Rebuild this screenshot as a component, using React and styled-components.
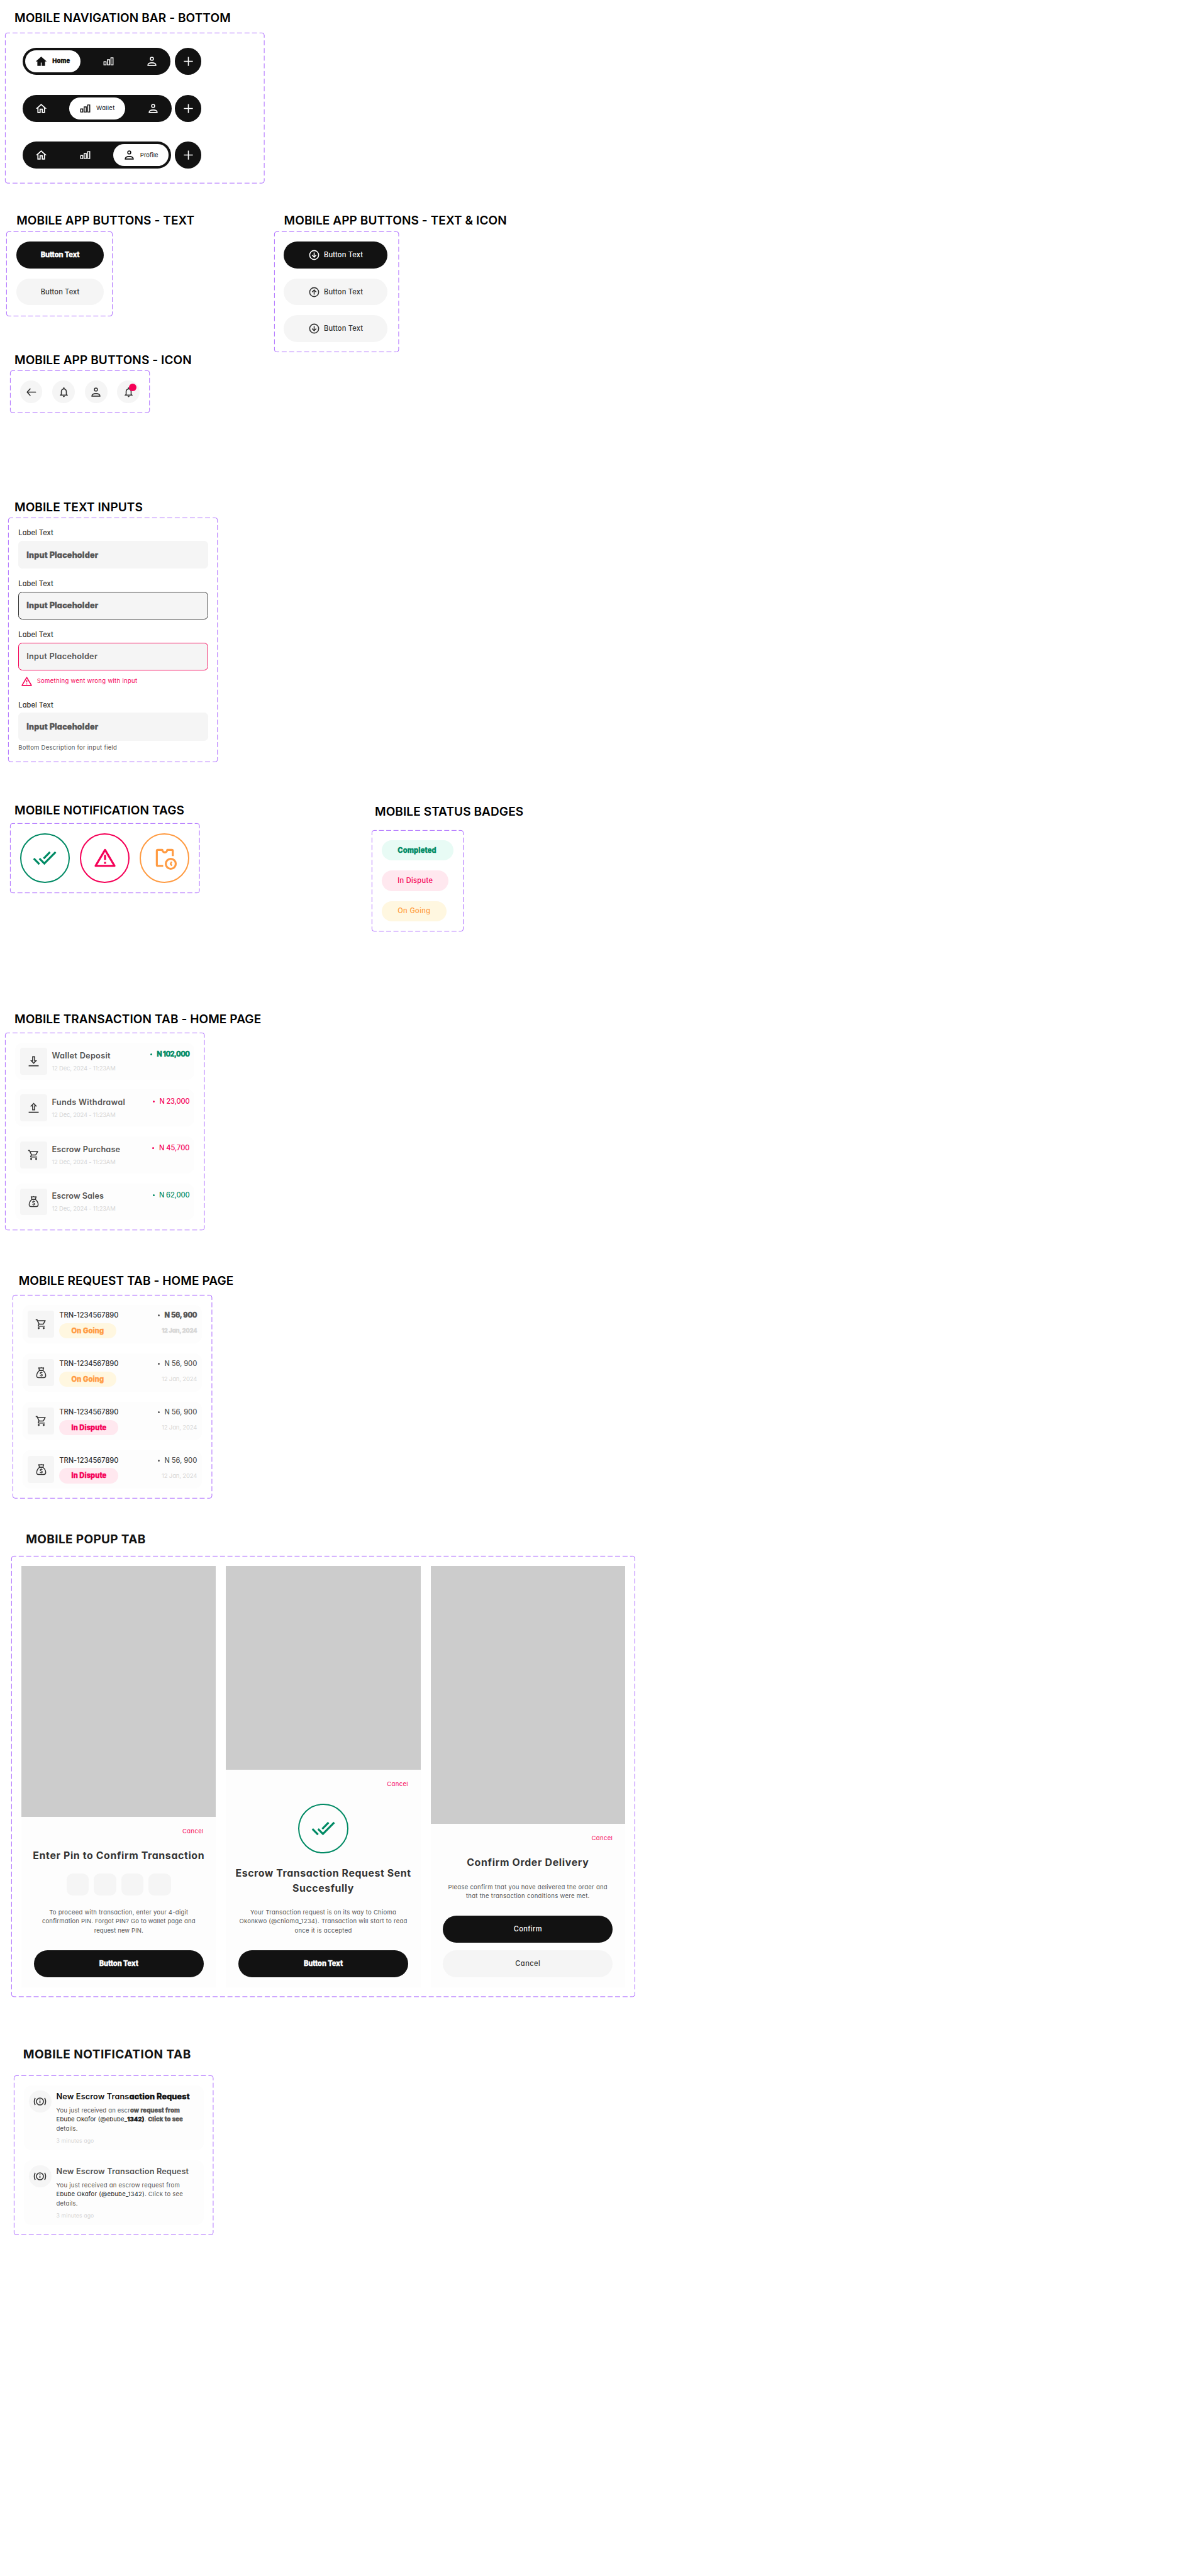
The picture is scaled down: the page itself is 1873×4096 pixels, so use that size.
import React from "react";
import styled, { createGlobalStyle, css } from "styled-components";
import { MdDoneAll, MdOutlineShoppingCart, MdNotificationsNone } from "react-icons/md";

const u = (n) => `${n / 10}rem`;

const c = {
  ink: "#121212", text: "#333333", mute: "#555555", faint: "#d6d6d6", fill: "#f5f5f5", card: "#fdfdfd",
  red: "#f50057", redBg: "#ffe8ef", green: "#008a64", greenBg: "#e8fbf5", orange: "#ff9b42", orangeBg: "#fff7e0",
  purple: "#9747ff", grey: "#cccccc",
};

const Global = createGlobalStyle`
  html { font-size: 7.9331px; }
  body { margin: 0; background: #ffffff; font-family: Inter, "Open Sans", sans-serif; font-feature-settings: "cv11"; }
  *, *::before, *::after { box-sizing: border-box; }
`;

const Page = styled.main`height: ${u(5163)}; padding-top: ${u(21.2)}; overflow: hidden;`;
const Section = styled.section`margin-top: ${(p) => u(p.$top || 0)};`;
const Columns = styled.div`display: flex; align-items: flex-start;`;
const Column = styled.div`width: ${(p) => u(p.$w)}; flex: none;`;

/* track: letter spacing in thousandths of an em */
const T = styled.span`
  display: block;
  white-space: nowrap;
  font-size: ${(p) => u(p.$size || 14)};
  line-height: ${(p) => u(p.$lh || 21)};
  font-weight: ${(p) => p.$weight || 400};
  color: ${(p) => p.$color || c.text};
  letter-spacing: ${(p) => (p.$track || 0) / 1000}em;
  ${(p) => p.$heavy && css`font-weight: 800; -webkit-text-stroke: 0.4px currentColor;`}
`;

const Title = styled.h2`
  margin: 0 0 0 ${(p) => u(p.$x)};
  font-size: ${u(24)};
  line-height: ${u(30)};
  font-weight: ${(p) => p.$weight || 600};
  color: ${(p) => p.$color || "#000"};
  letter-spacing: ${(p) => (p.$track || 5) / 1000}em;
  white-space: nowrap;
`;

const Panel = styled.div`
  position: relative;
  display: flex;
  flex-direction: ${(p) => (p.$row ? "row" : "column")};
  align-items: flex-start;
  width: ${(p) => u(p.$w)};
  height: ${(p) => u(p.$h)};
  margin: ${(p) => u(p.$top)} 0 0 ${(p) => u(p.$x)};
  padding: ${(p) => p.$pad || u(20)};
  gap: ${(p) => u(p.$gap ?? 20)};
`;
const Outline = styled.svg`position: absolute; inset: 0; width: 100%; height: 100%; overflow: visible; pointer-events: none;`;

function Frame({ x, top, w, h, gap, row, pad, children }) {
  const fit = (len) => { const n = Math.round((len + 5) / 15); return `10 ${(len + 5) / n - 10}`; };
  const r = w - 0.5, b = h - 0.5;
  return (
    <Panel $x={x} $top={top} $w={w} $h={h} $gap={gap} $row={row} $pad={pad}>
      <Outline viewBox={`0 0 ${w} ${h}`} preserveAspectRatio="none" fill="none" stroke={c.purple}>
        <path d={`M5 .5H${w - 5}M5 ${b}H${w - 5}`} strokeDasharray={fit(w)} strokeDashoffset="5" />
        <path d={`M.5 5V${h - 5}M${r} 5V${h - 5}`} strokeDasharray={fit(h)} strokeDashoffset="5" />
        <path d={`M.5 5A4.5 4.5 0 0 1 5 .5M${w - 5} .5A4.5 4.5 0 0 1 ${r} 5M${r} ${h - 5}A4.5 4.5 0 0 1 ${w - 5} ${b}M5 ${b}A4.5 4.5 0 0 1 .5 ${h - 5}`} />
      </Outline>
      {children}
    </Panel>
  );
}

const Icon = styled.span`
  display: inline-flex;
  flex: none;
  width: ${(p) => u(p.$s || 24)};
  height: ${(p) => u(p.$s || 24)};
  color: ${(p) => p.$color || "inherit"};
  svg { width: 100%; height: 100%; overflow: visible; }
`;
const Svg = ({ children, sw = 2, ...r }) => (
  <svg viewBox="0 0 24 24" fill="none" stroke="currentColor" strokeWidth={sw} {...r}>{children}</svg>
);
const Home = ({ solid }) => (
  <Svg stroke="none" fill="currentColor" viewBox="1.1 0.7 21.8 21.8">
    <path d={solid ? "M11.200 20v-6h1.600v6H19v-8h3L12 3 2 12h3v8z" : "M12 5.690l5 4.500V18h-2v-6H9v6H7v-7.810l5-4.500M12 3L2 12h3v8h6v-6h2v6h6v-8h3L12 3z"} />
  </Svg>
);
const Bars = () => <Svg sw="1.8"><path d="M2.9 12.9h4.2v6.2H2.9zM9.9 8.9h4.2v10.2H9.9zM16.9 4.9h4.2v14.2h-4.2z" /></Svg>;
const Person = () => <Svg><circle cx="12" cy="6.800" r="3" /><path d="M4 20c0-3.200 3.600-5 8-5s8 1.800 8 5z" /></Svg>;
const Plus = () => <Svg><path d="M12 3v18M3 12h18" /></Svg>;
const Back = () => <Svg strokeLinejoin="round" strokeLinecap="round"><path d="M21 12H4.200M10 5.500 4 12l6 6.500" /></Svg>;
const ArrowDown = () => <Svg><circle cx="12" cy="12" r="9" /><path d="M12 7v9M7.800 12l4.200 4.200 4.200-4.200" /></Svg>;
const ArrowUp = () => <Svg><circle cx="12" cy="12" r="9" /><path d="M12 17V8M7.800 12 12 7.800l4.200 4.200" /></Svg>;
const Warning = () => (
  <Svg strokeLinejoin="round"><path d="M12 4l9.500 16h-19z" /><path d="M12 9v5M12 16v2" /></Svg>
);
const Pending = () => (
  <Svg strokeLinejoin="round">
    <path d="M20 10.200V5a1 1 0 0 0-1-1h-4.500a2.500 2.500 0 0 1-5 0H5a1 1 0 0 0-1 1v14a1 1 0 0 0 1 1h5.400" />
    <circle cx="18" cy="18" r="5" /><path d="M18.900 15.800 17.700 18l1.400 1.900" strokeWidth="1.500" strokeLinejoin="miter" />
  </Svg>
);
const Deposit = () => <Svg fill="currentColor" stroke="none" fillRule="evenodd"><path d="M19 10h-4V2H9v8H5l7 7.200zM11 12V4h2v8h1.400L12 14.400 9.600 12zM2 20h20v2H2z" /></Svg>;
const Withdraw = () => <Svg fill="currentColor" stroke="none" fillRule="evenodd"><path d="M19 9.200h-4V17H9V9.200H5L12 2zM11 7.200V15h2V7.200h1.400L12 4.800 9.600 7.200zM2 20h20v2H2z" /></Svg>;
const Bag = () => (
  <Svg sw="1.8" strokeLinejoin="round">
    <path d="M8.600 7.500 7 2.500l3 .4 2-.9 2 .9 3-.4-1.600 5z" />
    <path d="M8.600 7.500h6.800c3.400 3 5.600 6.500 5.600 10.500 0 3-1 4-3.500 4h-11C4 22 3 21 3 18c0-4 2.200-7.500 5.600-10.500z" />
    <path strokeWidth="1.400" d="M14.300 12.600c-.5-.8-1.300-1.100-2.300-1.100-1.300 0-2.200.6-2.200 1.700 0 2.600 4.600 1.200 4.600 3.700 0 1.100-1 1.700-2.400 1.700-1.100 0-2-.4-2.500-1.200M12 10v1.500M12 18.600v1.400" />
  </Svg>
);
const Alert = () => (
  <Svg><circle cx="12" cy="12" r="7" /><path d="M12 11.500v4M12 8v2" /><path d="M2.500 4.800c-2 4-2 10.400 0 14.400M21.500 4.800c2 4 2 10.400 0 14.400" /></Svg>
);

/* Bottom navigation */
const NavRow = styled.div`display: flex; height: ${u(54)};`;
const NavBar = styled.nav`
  display: flex; align-items: center; gap: ${u(24)};
  height: ${u(54)}; width: ${(p) => u(p.$w)}; padding: 0 ${u(5)}; margin-right: ${(p) => u(304 - p.$w)};
  border-radius: ${u(27)}; background: ${c.ink}; color: #fff;
`;
const NavItem = styled.div`
  display: flex; align-items: center; gap: ${u(10)};
  width: ${(p) => u(p.$w || 64)}; height: ${u(44)}; padding-left: ${u(20)}; flex: none;
  border-radius: ${u(22)};
  ${(p) => p.$w && css`background: #fff; color: ${c.ink};`}
`;
const Round = styled.div`
  position: relative; display: flex; align-items: center; justify-content: center; flex: none;
  width: ${(p) => u(p.$d)}; height: ${(p) => u(p.$d)}; border-radius: 50%;
  background: ${(p) => p.$bg || c.fill}; color: ${(p) => p.$color || c.text};
`;
const Dot = styled.i`
  position: absolute; left: ${u(24)}; top: ${u(6)}; width: ${u(15)}; height: ${u(15)}; border-radius: 50%; background: ${c.red};
`;
const navItems = [
  { id: "home", label: "Home", track: 17, heavy: true, bar: 296, pill: 110 },
  { id: "wallet", label: "Wallet", track: 27, bar: 298, pill: 112 },
  { id: "profile", label: "Profile", track: -2, bar: 297, pill: 111 },
];
const NavIcon = ({ id, active }) => (
  <Icon>{id === "home" ? <Home solid={active} /> : id === "wallet" ? <Bars /> : <Person />}</Icon>
);

/* Buttons */
const Button = styled.div`
  display: flex; align-items: center; justify-content: center; gap: ${u(8)};
  width: ${(p) => u(p.$w)}; height: ${u(54)}; flex: none; border-radius: ${u(27)};
  background: ${(p) => (p.$dark ? c.ink : c.fill)}; color: ${(p) => (p.$dark ? "#fff" : c.text)};
`;

/* Inputs */
const Field = styled.div`display: flex; flex-direction: column; gap: ${u(5)}; width: ${u(380)};`;
const Box = styled.div`
  display: flex; align-items: center; height: ${u(56)}; padding: 0 ${u(15)}; border-radius: ${u(8)};
  background: ${c.fill}; border: 1px solid ${(p) => p.$border || c.fill};
`;
const ErrorRow = styled.div`display: flex; align-items: center; gap: ${u(8)}; height: ${u(34)}; padding-left: ${u(5)};`;
const Input = ({ border, heavy }) => (
  <>
    <T $weight={500} $track={4}>Label Text</T>
    <Box $border={border}><T $size={16} $lh={24} $weight={600} $color={c.mute} $heavy={heavy} $track={heavy ? 13 : 22}>Input Placeholder</T></Box>
  </>
);

/* Tags and badges */
const Ring = styled.div`
  display: flex; align-items: center; justify-content: center; flex: none;
  width: ${u(100)}; height: ${u(100)}; border-radius: 50%; border: ${u(3)} solid ${(p) => p.$color}; color: ${(p) => p.$color};
`;
const Pill = styled.div`
  display: flex; align-items: center; width: ${(p) => u(p.$w)}; height: ${(p) => u(p.$h)};
  padding-left: ${(p) => u(p.$pad)}; border-radius: ${u(21)}; background: ${(p) => p.$bg};
`;

/* List cards */
const Card = styled.article`
  display: flex; align-items: center; width: ${u(360)}; height: ${(p) => u(p.$h)}; padding: ${u(10)}; gap: ${u(10)};
  border-radius: ${u(15)}; background: ${c.card};
`;
const Tile = styled.div`
  display: flex; align-items: center; justify-content: center; width: ${u(54)}; height: ${u(54)}; flex: none;
  border-radius: ${u(5)}; background: ${c.fill}; color: ${c.text};
`;
const Stack = styled.div`display: flex; flex-direction: column; flex: 1; gap: ${u(5)};`;
const Side = styled.div`
  display: flex; flex-direction: column; align-items: flex-end; align-self: stretch;
  gap: ${(p) => u(p.$gap || 0)}; padding-top: ${(p) => u(p.$top || 0)};
`;
const Amount = styled.div`
  display: flex; align-items: center; gap: ${u(9.5)}; color: ${(p) => p.$color};
  &::before { content: ""; width: 3px; height: 3px; border-radius: 50%; background: currentColor; }
`;

/* Popups */
const Phone = styled.div`display: flex; flex-direction: column; width: ${u(390)}; height: ${u(844)}; flex: none; background: ${c.grey};`;
const Sheet = styled.div`
  display: flex; flex-direction: column; align-items: center; margin-top: auto; height: ${(p) => u(p.$h)};
  padding: ${u(20)} ${u(25)}; background: ${c.card};
`;
const CancelLink = styled.div`align-self: flex-end;`;
const Block = styled.div`display: flex; flex-direction: column; align-items: center; gap: ${(p) => u(p.$gap || 0)}; margin-top: ${(p) => u(p.$top)};`;
const Pins = styled.div`display: flex; gap: ${u(10)}; margin-top: ${u(20)};`;
const Pin = styled.i`width: ${u(45)}; height: ${u(45)}; border-radius: ${u(12)}; background: ${c.fill};`;
const Cancel = () => <CancelLink><T $size={12} $lh={18} $color={c.red} $track={34}>Cancel</T></CancelLink>;
const Heading = ({ lines }) => (
  <Block $top={25}>{lines.map(([t, k]) => <T key={t} $size={20} $lh={30} $weight={700} $track={k}>{t}</T>)}</Block>
);
const Copy = ({ lines }) => (
  <Block $top={25}>{lines.map(([t, k]) => <T key={t} $size={12} $lh={18} $color={c.mute} $track={k}>{t}</T>)}</Block>
);

/* Notifications */
const Note = styled.article`display: flex; gap: ${u(10)}; width: ${u(360)}; height: ${u(130)}; padding: ${u(10)}; border-radius: ${u(15)}; background: ${c.card};`;
const NoteText = styled.div`display: flex; flex-direction: column; gap: ${u(8)};`;
const Glow = styled.b`font-weight: 800; -webkit-text-stroke: 0.4px currentColor;`;
const Name = styled.span`color: ${c.ink};`;

const transactions = [
  [Deposit, "Wallet Deposit", 24, "N 102,000", -50, c.green, true],
  [Withdraw, "Funds Withdrawal", 26, "N 23,000", -16, c.red],
  [MdOutlineShoppingCart, "Escrow Purchase", 12, "N 45,700", -5, c.red],
  [Bag, "Escrow Sales", 2, "N 62,000", -15, c.green],
];
const requests = [
  [MdOutlineShoppingCart, true, true], [Bag, true], [MdOutlineShoppingCart, false], [Bag, false],
];

export default function App() {
  return (
    <Page>
      <Global />
      <Section>
        <Title $x={29}>MOBILE NAVIGATION BAR - BOTTOM</Title>
        <Frame x={10} top={14.8} w={520} h={302} gap={40} pad={`${u(30)} ${u(36)}`}>
          {navItems.map((row) => (
            <NavRow key={row.id}>
              <NavBar $w={row.bar}>
                {navItems.map(({ id }) => (
                  <NavItem key={id} $w={row.id === id ? row.pill : 0}>
                    <NavIcon id={id} active={row.id === id} />
                    {row.id === id && <T $size={12} $lh={18} $color={c.ink} $heavy={row.heavy} $track={row.track}>{row.label}</T>}
                  </NavItem>
                ))}
              </NavBar>
              <Round $d={54} $bg={c.ink} $color="#fff"><Icon><Plus /></Icon></Round>
            </NavRow>
          ))}
        </Frame>
      </Section>

      <Columns>
        <Column $w={549}>
          <Section $top={59.7}>
            <Title $x={33}>MOBILE APP BUTTONS - TEXT</Title>
            <Frame x={13} top={6.3} w={213} h={170}>
              <Button $w={175} $dark><T $weight={500} $color="#fff" $heavy $track={-7}>Button Text</T></Button>
              <Button $w={175}><T $weight={500} $track={13}>Button Text</T></Button>
            </Frame>
          </Section>
          <Section $top={72.7}>
            <Title $x={29}>MOBILE APP BUTTONS - ICON</Title>
            <Frame x={20} top={6.3} w={280} h={85} row>
              <Round $d={45}><Icon><Back /></Icon></Round>
              <Round $d={45}><Icon><MdNotificationsNone /></Icon></Round>
              <Round $d={45}><Icon><Person /></Icon></Round>
              <Round $d={45}><Icon><MdNotificationsNone /></Icon><Dot /></Round>
            </Frame>
          </Section>
        </Column>
        <Section $top={59.7}>
          <Title $x={20.3}>MOBILE APP BUTTONS - TEXT & ICON</Title>
          <Frame x={0} top={6.3} w={250} h={242}>
            {[ArrowDown, ArrowUp, ArrowDown].map((A, i) => (
              <Button key={i} $w={207} $dark={i === 0}><Icon><A /></Icon><T $weight={500} $color="inherit" $track={17}>Button Text</T></Button>
            ))}
          </Frame>
        </Section>
      </Columns>

      <Section $top={173.6}>
        <Title $x={29}>MOBILE TEXT INPUTS</Title>
        <Frame x={17} top={6.4} w={420} h={490}>
          <Field><Input heavy /></Field>
          <Field><Input heavy border={c.text} /></Field>
          <Field>
            <Input border={c.red} />
            <ErrorRow><Icon $color={c.red}><Warning /></Icon><T $size={12} $lh={18} $color={c.red} $track={32}>Something went wrong with input</T></ErrorRow>
          </Field>
          <Field>
            <Input heavy />
            <T $size={12} $lh={18} $color={c.mute} $track={26}>Bottom Description for input field</T>
          </Field>
        </Frame>
      </Section>

      <Columns>
        <Column $w={745}>
          <Section $top={82.3}>
            <Title $x={29}>MOBILE NOTIFICATION TAGS</Title>
            <Frame x={20} top={9.7} w={380} h={140} row>
              <Ring $color={c.green}><Icon $s={48}><MdDoneAll /></Icon></Ring>
              <Ring $color={c.red}><Icon $s={48}><Warning /></Icon></Ring>
              <Ring $color={c.orange}><Icon $s={48}><Pending /></Icon></Ring>
            </Frame>
          </Section>
        </Column>
        <Section $top={84.3}>
          <Title $x={6.3}>MOBILE STATUS BADGES</Title>
          <Frame x={0} top={21.7} w={184} h={203}>
            <Pill $w={144.3} $h={41} $pad={32} $bg={c.greenBg}><T $weight={500} $color={c.green} $heavy $track={14}>Completed</T></Pill>
            <Pill $w={134.3} $h={41} $pad={32} $bg={c.redBg}><T $weight={500} $color={c.red} $track={25}>In Dispute</T></Pill>
            <Pill $w={130.3} $h={41} $pad={32} $bg={c.orangeBg}><T $weight={500} $color={c.orange} $track={32}>On Going</T></Pill>
          </Frame>
        </Section>
      </Columns>

      <Section $top={161.3}>
        <Title $x={29}>MOBILE TRANSACTION TAB - HOME PAGE</Title>
        <Frame x={10} top={11.7} w={400} h={396}>
          {transactions.map(([I, name, nameTrack, amount, track, color, heavy]) => (
            <Card key={name} $h={74}>
              <Tile><Icon><I /></Icon></Tile>
              <Stack>
                <T $size={16} $lh={24} $weight={600} $color={c.mute} $track={nameTrack}>{name}</T>
                <T $size={12} $lh={18} $color={c.faint} $track={-24}>12 Dec, 2024 - 11:23AM</T>
              </Stack>
              <Side $top={3}><Amount $color={color}><T $weight={500} $color="inherit" $heavy={heavy} $track={track}>{amount}</T></Amount></Side>
            </Card>
          ))}
        </Frame>
      </Section>

      <Section $top={87.2}>
        <Title $x={37.5}>MOBILE REQUEST TAB - HOME PAGE</Title>
        <Frame x={25} top={12.8} w={400} h={408}>
          {requests.map(([I, going, heavy], i) => (
            <Card key={i} $h={77}>
              <Tile><Icon><I /></Icon></Tile>
              <Stack>
                <T $weight={500} $track={-5}>TRN-1234567890</T>
                <Pill $w={going ? 114 : 118.3} $h={31} $pad={24} $bg={going ? c.orangeBg : c.redBg}>
                  <T $weight={500} $color={going ? c.orange : c.red} $heavy $track={going ? 16 : 8}>{going ? "On Going" : "In Dispute"}</T>
                </Pill>
              </Stack>
              <Side $gap={12}>
                <Amount $color={c.mute}><T $weight={500} $color="inherit" $heavy={heavy} $track={heavy ? -18 : -4}>N 56, 900</T></Amount>
                <T $size={12} $lh={18} $color={c.faint} $heavy={heavy} $track={heavy ? -33 : -16}>12 Jan, 2024</T>
              </Side>
            </Card>
          ))}
        </Frame>
      </Section>

      <Section $top={66.6}>
        <Title $x={52} $track={18} $weight={700} $color={c.ink}>MOBILE POPUP TAB</Title>
        <Frame x={23} top={18.4} w={1250} h={884} row>
          <Phone>
            <Sheet $h={341}>
              <Cancel />
              <Heading lines={[["Enter Pin to Confirm Transaction", 40]]} />
              <Pins><Pin /><Pin /><Pin /><Pin /></Pins>
              <Copy lines={[["To proceed with transaction, enter your 4-digit", 25], ["confirmation PIN. Forgot PIN? Go to wallet page and", 18], ["request new PIN.", 10]]} />
              <Block $top={30}><Button $w={340} $dark><T $weight={500} $color="#fff" $heavy $track={-4}>Button Text</T></Button></Block>
            </Sheet>
          </Phone>
          <Phone>
            <Sheet $h={436}>
              <Cancel />
              <Block $top={30}><Ring $color={c.green}><Icon $s={48}><MdDoneAll /></Icon></Ring></Block>
              <Heading lines={[["Escrow Transaction Request Sent", 37], ["Succesfully", 35]]} />
              <Copy lines={[["Your Transaction request is on its way to Chioma", 25], ["Okonkwo (@chioma_1234). Transaction will start to read", 28], ["once it is accepted", 32]]} />
              <Block $top={30}><Button $w={340} $dark><T $weight={500} $color="#fff" $heavy $track={-4}>Button Text</T></Button></Block>
            </Sheet>
          </Phone>
          <Phone>
            <Sheet $h={327}>
              <Cancel />
              <Heading lines={[["Confirm Order Delivery", 43]]} />
              <Copy lines={[["Please confirm that you have delivered the order and", 28], ["that the transaction conditions were met.", 31]]} />
              <Block $top={30} $gap={15}>
                <Button $w={340} $dark><T $weight={500} $color="#fff" $track={31}>Confirm</T></Button>
                <Button $w={340}><T $weight={500} $track={40}>Cancel</T></Button>
              </Block>
            </Sheet>
          </Phone>
        </Frame>
      </Section>

      <Section $top={99.7}>
        <Title $x={46.3} $track={26} $weight={700} $color={c.ink}>MOBILE NOTIFICATION TAB</Title>
        <Frame x={28} top={27.3} w={400} h={320}>
          <Note>
            <Round $d={45}><Icon><Alert /></Icon></Round>
            <NoteText>
              <T $size={16} $lh={24} $weight={600} $color={c.ink} $track={9}>New Escrow Trans<Glow>action Request</Glow></T>
              <div>
                <T $size={12} $lh={18} $color={c.mute} $track={16}>You just received an escr<Glow>ow request from</Glow></T>
                <T $size={12} $lh={18} $color={c.mute} $track={14}><Name>Ebube Okafor (@ebube_<Glow>1342)</Glow></Name>. <Glow>Click to see</Glow></T>
                <T $size={12} $lh={18} $color={c.mute} $track={21}>details.</T>
              </div>
              <T $size={11} $lh={16} $color={c.faint} $track={10}>3 minutes ago</T>
            </NoteText>
          </Note>
          <Note>
            <Round $d={45}><Icon><Alert /></Icon></Round>
            <NoteText>
              <T $size={16} $lh={24} $weight={600} $color={c.mute} $track={12}>New Escrow Transaction Request</T>
              <div>
                <T $size={12} $lh={18} $color={c.mute} $track={25}>You just received an escrow request from</T>
                <T $size={12} $lh={18} $color={c.mute} $track={26}><Name>Ebube Okafor (@ebube_1342)</Name>. Click to see</T>
                <T $size={12} $lh={18} $color={c.mute} $track={21}>details.</T>
              </div>
              <T $size={11} $lh={16} $color={c.faint} $track={10}>3 minutes ago</T>
            </NoteText>
          </Note>
        </Frame>
      </Section>
    </Page>
  );
}
